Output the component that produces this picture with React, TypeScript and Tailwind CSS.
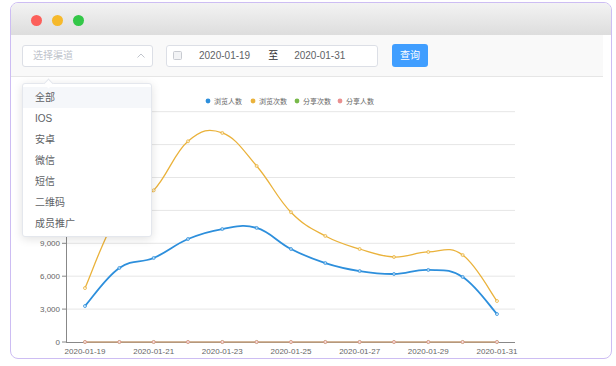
import React from "react";

const dates = [
  "2020-01-19", "2020-01-20", "2020-01-21", "2020-01-22", "2020-01-23", "2020-01-24", "2020-01-25",
  "2020-01-26", "2020-01-27", "2020-01-28", "2020-01-29", "2020-01-30", "2020-01-31",
];

const viewUsers = [3280, 6750, 7660, 9390, 10300, 10400, 8480, 7200, 6470, 6200, 6570, 5930, 2550];
const viewTimes = [4920, 11830, 13830, 18300, 19060, 16050, 11830, 9670, 8480, 7750, 8210, 7930, 3740];
const zeros = dates.map(() => 0);

const channels = ["全部", "IOS", "安卓", "微信", "短信", "二维码", "成员推广"];

// chart geometry (page coordinates, the svg is shifted back by the frame offset)
const x0 = 85;
const stepX = 34.33;
const yBase = 342;
const stepY = 32.9; // px per 3,000

const px = (i: number) => x0 + i * stepX;
const py = (v: number) => yBase - (v / 3000) * stepY;

const smoothPath = (vals: number[]) => {
  const pts = vals.map((v, i) => [px(i), py(v)]);
  let d = `M${pts[0][0]},${pts[0][1]}`;
  for (let i = 0; i < pts.length - 1; i++) {
    const p0 = pts[i - 1] || pts[i];
    const p1 = pts[i];
    const p2 = pts[i + 1];
    const p3 = pts[i + 2] || p2;
    const k = 0.2;
    const c1x = p1[0] + (p2[0] - p0[0]) * k;
    const c1y = p1[1] + (p2[1] - p0[1]) * k;
    const c2x = p2[0] - (p3[0] - p1[0]) * k;
    const c2y = p2[1] - (p3[1] - p1[1]) * k;
    d += ` C${c1x},${c1y} ${c2x},${c2y} ${p2[0]},${p2[1]}`;
  }
  return d;
};

const Series = ({ vals, color, width }: { vals: number[]; color: string; width: number }) => (
  <g>
    <path d={smoothPath(vals)} fill="none" stroke={color} strokeWidth={width} />
    {vals.map((v, i) => (
      <circle key={i} cx={px(i)} cy={py(v)} r={1.5} fill="#fff" fillOpacity={0.6} stroke={color} strokeWidth={0.8} />
    ))}
  </g>
);

const Chart = () => {
  const legend = [
    { name: "浏览人数", color: "#2d8fdc", x: 208 },
    { name: "浏览次数", color: "#eab23b", x: 253 },
    { name: "分享次数", color: "#78b94a", x: 297 },
    { name: "分享人数", color: "#e99090", x: 340 },
  ];
  return (
    <svg width={600} height={280} className="block">
      <g transform="translate(-11,-77)" fontFamily="'Liberation Sans', 'Noto Sans CJK SC', sans-serif">
        {legend.map((l) => (
          <g key={l.name}>
            <circle cx={l.x} cy={101} r={2.4} fill={l.color} />
            <text x={l.x + 6} y={103.5} fontSize={7} fill="#666">
              {l.name}
            </text>
          </g>
        ))}

        {[1, 2, 3, 4, 5, 6, 7].map((k) => (
          <line key={k} x1={66} x2={515} y1={yBase - k * stepY} y2={yBase - k * stepY} stroke="#e6e6e6" strokeWidth={1} />
        ))}
        {/* upper labels sit under the open dropdown */}
        {[0, 1, 2, 3].map((k) => (
          <g key={k}>
            <line x1={62} x2={66} y1={yBase - k * stepY} y2={yBase - k * stepY} stroke="#888" strokeWidth={1} />
            <text x={60} y={yBase - k * stepY + 3} fontSize={8} fill="#666" textAnchor="end">
              {(k * 3000).toLocaleString("en-US")}
            </text>
          </g>
        ))}
        <line x1={66.5} x2={66.5} y1={yBase - 7 * stepY} y2={yBase} stroke="#888" strokeWidth={1} />
        <line x1={66} x2={515} y1={yBase + 0.5} y2={yBase + 0.5} stroke="#888" strokeWidth={1} />

        {dates.map((d, i) =>
          i % 2 === 0 ? (
            <text key={d} x={px(i)} y={354} fontSize={8} fill="#666" textAnchor="middle">
              {d}
            </text>
          ) : null
        )}

        <Series vals={zeros} color="#78b94a" width={1.2} />
        <Series vals={zeros} color="#e99090" width={1.2} />
        <Series vals={viewTimes} color="#eab23b" width={1.3} />
        <Series vals={viewUsers} color="#2d8fdc" width={1.8} />
      </g>
    </svg>
  );
};

const App: React.FC = () => {
  return (
    <div
      className="w-[616px] h-[366px] bg-white pl-[10px] pt-[2px]"
      style={{ fontFamily: "'Liberation Sans', 'Noto Sans CJK SC', sans-serif" }}
    >
      <div className="relative w-[602px] h-[357px] border border-[#cdbdf3] rounded-[8px] overflow-hidden flex flex-col bg-white">
        {/* window title bar */}
        <div className="h-[32px] shrink-0 flex items-center gap-[10px] pl-[20px] pt-[2px] bg-gradient-to-b from-[#f3f3f3] to-[#dddddd]">
          <span className="w-[11px] h-[11px] rounded-full bg-[#fc5f5a]" />
          <span className="w-[11px] h-[11px] rounded-full bg-[#f6b92b]" />
          <span className="w-[11px] h-[11px] rounded-full bg-[#33c748]" />
        </div>

        {/* filter bar */}
        <div className="h-[42px] shrink-0 mr-[8px] flex items-center pl-[11px] bg-[#f9f9f9] border-b border-[#e6e6e6]">
          <div className="w-[131px] h-[22px] flex items-center justify-between pl-[10px] pr-[7px] bg-white border border-[#dcdfe6] rounded-[3px]">
            <span className="text-[10px] text-[#c0c4cc]">选择渠道</span>
            <svg width="8" height="5" viewBox="0 0 8 5">
              <path d="M0.5 4.5 L4 1 L7.5 4.5" fill="none" stroke="#c0c4cc" strokeWidth="1" />
            </svg>
          </div>

          <div className="ml-[13px] w-[212px] h-[22px] flex items-center pl-[6px] bg-white border border-[#dcdfe6] rounded-[3px]">
            <svg width="9" height="9" viewBox="0 0 9 9">
              <rect x="0.5" y="0.5" width="8" height="8" rx="1" fill="#f2f3f5" stroke="#c8cbd1" strokeWidth="1" />
            </svg>
            <span className="ml-[17px] text-[10px] text-[#606266]">2020-01-19</span>
            <span className="ml-[18px] text-[10px] text-[#303133]">至</span>
            <span className="ml-[16px] text-[10px] text-[#606266]">2020-01-31</span>
          </div>

          <button className="ml-[14px] w-[36px] h-[23px] rounded-[3px] bg-[#409eff] text-white text-[10px] flex items-center justify-center">
            查询
          </button>
        </div>

        {/* chart */}
        <div className="flex-1">
          <Chart />
        </div>

        {/* open channel dropdown */}
        <div className="absolute left-[11px] top-[80px] w-[130px] h-[154px] bg-white border border-[#e4e7ed] rounded-[3px] shadow-[0_2px_10px_rgba(0,0,0,0.12)] py-[3px]">
          <span className="absolute left-[22px] -top-[4px] w-[7px] h-[7px] bg-white rotate-45 border-l border-t border-[#e4e7ed]" />
          {channels.map((c, i) => (
            <div
              key={c}
              className={`h-[21px] flex items-center pl-[12px] text-[10px] text-[#606266] ${i === 0 ? "bg-[#f5f7fa]" : ""}`}
            >
              {c}
            </div>
          ))}
        </div>
      </div>
    </div>
  );
};

export default App;
